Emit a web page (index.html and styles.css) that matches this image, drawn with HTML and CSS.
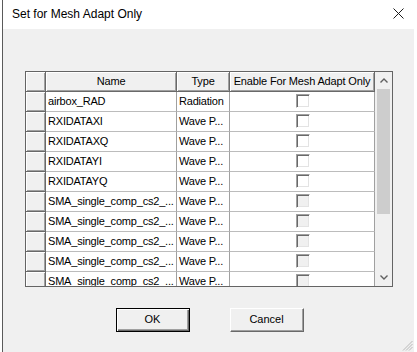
FILE: index.html
```html
<!DOCTYPE html>
<html>
<head>
<meta charset="utf-8">
<link rel="stylesheet" href="styles.css">
</head>
<body>
<div class="window">
  <div class="titlebar">
    <span class="title">Set for Mesh Adapt Only</span>
    <svg class="close" width="11" height="11" viewBox="0 0 11 11"><path d="M0.5 0.5 L10.5 10.5 M10.5 0.5 L0.5 10.5" stroke="#1a1a1a" stroke-width="1" fill="none"/></svg>
  </div>
  <div class="client">
    <div class="grid">
      <div class="cells">
        <div class="hdr"></div><div class="hdr">Name</div><div class="hdr">Type</div><div class="hdr">Enable For Mesh Adapt Only</div>

        <div class="hdr"></div><div class="cell">airbox_RAD</div><div class="cell">Radiation</div><div class="cell chk"><span class="box"></span></div>
        <div class="hdr"></div><div class="cell">RXIDATAXI</div><div class="cell">Wave P...</div><div class="cell chk"><span class="box"></span></div>
        <div class="hdr"></div><div class="cell">RXIDATAXQ</div><div class="cell">Wave P...</div><div class="cell chk"><span class="box"></span></div>
        <div class="hdr"></div><div class="cell">RXIDATAYI</div><div class="cell">Wave P...</div><div class="cell chk"><span class="box"></span></div>
        <div class="hdr"></div><div class="cell">RXIDATAYQ</div><div class="cell">Wave P...</div><div class="cell chk"><span class="box"></span></div>
        <div class="hdr"></div><div class="cell">SMA_single_comp_cs2_...</div><div class="cell">Wave P...</div><div class="cell chk"><span class="box off"></span></div>
        <div class="hdr"></div><div class="cell">SMA_single_comp_cs2_...</div><div class="cell">Wave P...</div><div class="cell chk"><span class="box off"></span></div>
        <div class="hdr"></div><div class="cell">SMA_single_comp_cs2_...</div><div class="cell">Wave P...</div><div class="cell chk"><span class="box off"></span></div>
        <div class="hdr"></div><div class="cell">SMA_single_comp_cs2_...</div><div class="cell">Wave P...</div><div class="cell chk"><span class="box off"></span></div>
        <div class="hdr"></div><div class="cell">SMA_single_comp_cs2_...</div><div class="cell">Wave P...</div><div class="cell chk"><span class="box off"></span></div>
      </div>
      <div class="scrollbar">
        <div class="arrow"><svg width="8" height="5" viewBox="0 0 8 5"><path d="M0.5 4.5 L4 1 L7.5 4.5" stroke="#606060" stroke-width="1.4" fill="none"/></svg></div>
        <div class="track"><div class="thumb"></div></div>
        <div class="arrow"><svg width="8" height="5" viewBox="0 0 8 5"><path d="M0.5 0.5 L4 4 L7.5 0.5" stroke="#606060" stroke-width="1.4" fill="none"/></svg></div>
      </div>
    </div>
    <div class="buttons">
      <div class="btn default">OK</div>
      <div class="btn">Cancel</div>
    </div>
    <svg class="grip" width="11" height="11" viewBox="0 0 11 11">
      <path d="M10.5 1 L1 10.5 M10.5 4 L4 10.5 M10.5 7 L7 10.5" stroke="#b8b8b8" stroke-width="1" fill="none"/>
    </svg>
  </div>
</div>
</body>
</html>
```
FILE: styles.css
```css
html, body {
  margin: 0;
  padding: 0;
}
body {
  width: 417px;
  height: 352px;
  overflow: hidden;
  background: #fff;
  font-family: "Liberation Sans", Arial, sans-serif;
  font-size: 11px;
  color: #000;
}
.window {
  margin-left: 2px;
  width: 412px;
  height: 352px;
  border-left: 1px solid #5a5a5a;
  box-sizing: border-box;
  display: flex;
  flex-direction: column;
}
.titlebar {
  height: 29px;
  flex: none;
  background: #fff;
  display: flex;
  align-items: center;
  justify-content: space-between;
  padding: 0 10px 0 9px;
  box-sizing: border-box;
}
.title {
  font-size: 12px;
  color: #000;
  margin-top: -1px;
}
.close {
  margin-top: -2px;
}
.client {
  flex: 1;
  background: #f0f0f0;
  padding: 42px 0 0 22px;
  box-sizing: border-box;
  position: relative;
}
.grid {
  width: 368px;
  height: 216px;
  border: 1px solid #646464;
  box-sizing: border-box;
  display: flex;
  background: #fff;
}
.cells {
  width: 349px;
  height: 214px;
  overflow: hidden;
  display: grid;
  grid-template-columns: 20px 131px 53px 145px;
  grid-auto-rows: 20px;
}
.hdr {
  background: #f0f0f0;
  border-right: 1px solid #696969;
  border-bottom: 1px solid #696969;
  box-shadow: inset 1px 1px #fff, inset -1px -1px #a0a0a0;
  box-sizing: border-box;
  text-align: center;
  line-height: 19px;
  white-space: nowrap;
  overflow: hidden;
  letter-spacing: -0.15px;
}
.cell {
  background: #fff;
  border-right: 1px solid #a0a0a0;
  border-bottom: 1px solid #bcbcbc;
  box-sizing: border-box;
  line-height: 19px;
  padding-left: 2px;
  white-space: nowrap;
  overflow: hidden;
  letter-spacing: -0.2px;
}
.chk {
  display: flex;
  justify-content: center;
  align-items: flex-start;
  padding: 2px 0 0 0;
}
.box {
  width: 14px;
  height: 14px;
  box-sizing: border-box;
  border-top: 1px solid #a0a0a0;
  border-left: 1px solid #a0a0a0;
  border-right: 1px solid #fff;
  border-bottom: 1px solid #fff;
  box-shadow: inset 1px 1px #696969, inset -1px -1px #e3e3e3;
  background: #fff;
  margin-left: 1px;
}
.box.off {
  background: #f0f0f0;
}
.scrollbar {
  width: 17px;
  height: 214px;
  background: #f0f0f0;
  display: flex;
  flex-direction: column;
}
.arrow {
  height: 17px;
  flex: none;
  display: flex;
  align-items: center;
  justify-content: center;
}
.track {
  flex: 1;
  padding: 0 2px;
}
.thumb {
  height: 125px;
  background: #cdcdcd;
}
.buttons {
  display: flex;
  justify-content: center;
  gap: 40px;
  margin-top: 21px;
  margin-left: -20px;
}
.btn {
  width: 74px;
  height: 24px;
  box-sizing: border-box;
  background: #f0f0f0;
  border-top: 1px solid #fff;
  border-left: 1px solid #fff;
  border-right: 1px solid #696969;
  border-bottom: 1px solid #696969;
  box-shadow: inset -1px -1px #a0a0a0;
  text-align: center;
  line-height: 21px;
}
.btn.default {
  border: 1px solid #000;
  box-shadow: inset 1px 1px #fff, inset -1px -1px #696969, inset -2px -2px #a0a0a0;
}
.grip {
  position: absolute;
  right: 1px;
  bottom: 1px;
}
```
